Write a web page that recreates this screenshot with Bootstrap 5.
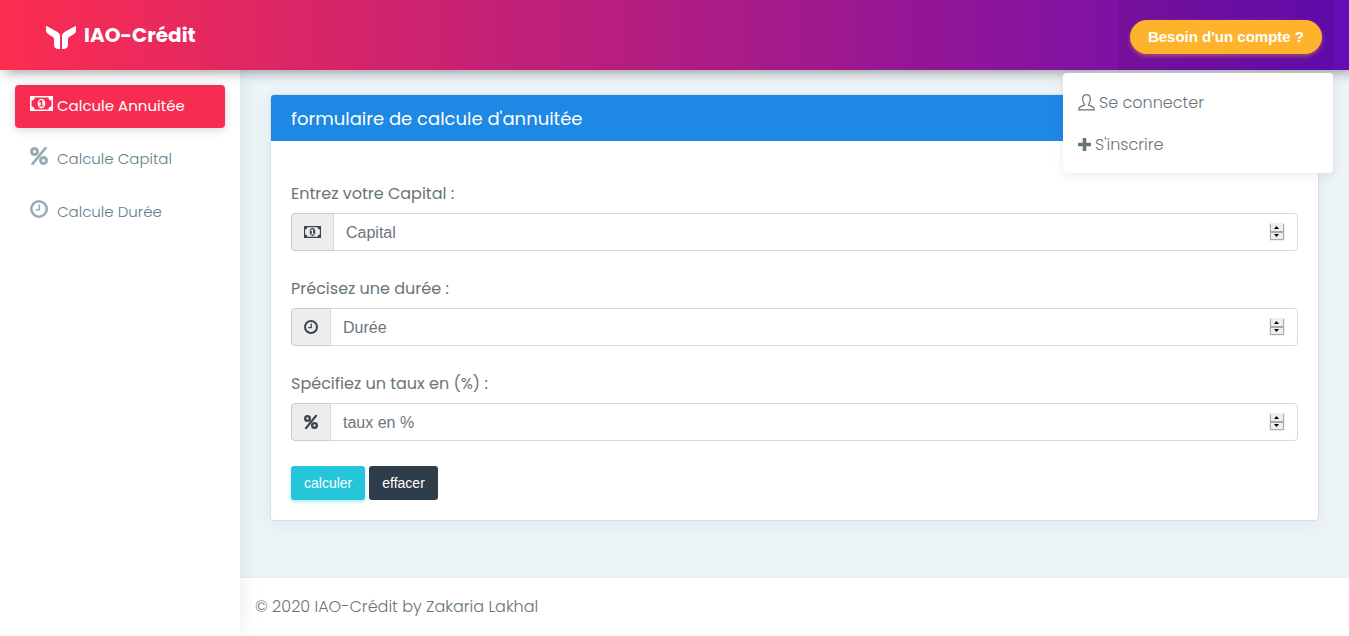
<!DOCTYPE html>
<html lang="fr">
<head>
<meta charset="utf-8">
<meta name="viewport" content="width=device-width, initial-scale=1">
<title>IAO-Crédit</title>
<link href="https://cdn.jsdelivr.net/npm/bootstrap@5.3.0/dist/css/bootstrap.min.css" rel="stylesheet">
<style>
  body { font-family: Poppins, Inter, sans-serif; font-weight: 300; font-size: 16px; line-height: 24px; color: #67757c; background: #edf4f8; }
  .form-control, .btn { font-family: "Liberation Sans", Arial, sans-serif; }
  svg { display: block; flex: none; }
  .topbar { height: 70px; padding: 0 15px 0 46px; background: linear-gradient(to right, #fc2d50, #640cb6); box-shadow: 5px 2px 12px rgba(0,0,0,.4); z-index: 30; }
  .brand { font-size: 20px; font-weight: 700; color: #fff; text-decoration: none; gap: 8px; }
  .brand svg { margin-top: 5px; }
  .account { background: rgba(0,0,0,.06); padding: 4px 12px 0; height: 70px; }
  .btn-account { background: #ffb22b; color: #fff; border: 0; border-radius: 60px; font-size: 15px; font-weight: 700; line-height: 20px; padding: 7px 18px; box-shadow: 0 2px 4px rgba(255,178,43,.4); }
  .btn-account:hover { background: #ffb22b; color: #fff; }
  .account-menu { top: 73px; right: 16px; width: 270px; padding: 9px 0 7px; background: #fff; border-radius: 4px; box-shadow: 0 3px 12px rgba(0,0,0,.08); z-index: 40; }
  .account-menu a { color: #67757c; padding: 9px 15px; gap: 4px; text-decoration: none; }
  .account-menu svg { margin-bottom: 2px; }
  .sidebar { width: 240px; padding: 15px; background: #fff; box-shadow: 1px 0 20px rgba(0,0,0,.08); z-index: 20; }
  .side-link { height: 43px; padding: 0 15px 2px; border-radius: 4px; font-size: 15px; color: #607d8b; text-decoration: none; margin-bottom: 10px; }
  .side-link .ico { width: 27px; color: #99abb4; padding-bottom: 5px; }
  .side-link.active { background: #f62d51; color: #fff; font-weight: 400; box-shadow: 0 2px 10px rgba(0,0,0,.16); }
  .side-link.active .ico { color: #fff; }
  .content { padding: 24px 30px; }
  .calc-card { border: 1px solid #d8e0e3; border-radius: 4px; box-shadow: 0 5px 20px rgba(0,0,0,.05); }
  .calc-card .card-header { background: #1e88e5; color: #fff; padding: 12px 20px 10px; border: 0; border-radius: 3px 3px 0 0; }
  .calc-card h1 { font-size: 18px; line-height: 24px; font-weight: 400; margin: 0; }
  .calc-card .card-body { padding: 40px 20px 20px; }
  .field { margin-bottom: 25px; }
  .form-label { font-weight: 400; line-height: 26px; margin-bottom: 6px; display: block; color: #67757c; }
  .input-group-text { background: #ebedef; border-color: #c9cccf; color: #414548; border-radius: 4px; }
  .form-control { height: 38px; padding: 7px 12px 5px; border-color: #d9d9d9; border-radius: 4px; }
  .form-control::placeholder { color: #6c757d; opacity: 1; }
  .form-control::-webkit-inner-spin-button { -webkit-appearance: none; opacity: 1; width: 16px; height: 18px; margin-bottom: 2px; background: url("data:image/svg+xml,%3Csvg xmlns='http://www.w3.org/2000/svg' viewBox='0 0 16 18'%3E%3Cpath fill='%23efefef' d='M0 0h16v18H0z'/%3E%3Cpath fill='none' stroke='%23aaa' d='M1.5 1v15.500h13V1M1 8.500h14M1 9.500h14'/%3E%3Cpath d='M5 6h5L7.500 3zM5 11h5l-2.500 3z'/%3E%3C/svg%3E") center/16px 18px no-repeat; }
  .btn-form { border: 0; border-radius: 3px; color: #fff; font-size: 14px; line-height: 20px; padding: 7px 13px; }
  .btn-calc { background: #26c6da; box-shadow: 0 2px 3px rgba(38,198,218,.35); }
  .btn-clear { background: #2f3d4a; }
  .page-footer { background: #fff; border-top: 1px solid #e9edef; padding: 17px 15px; }
</style>
</head>
<body>
<svg width="0" height="0" class="position-absolute" aria-hidden="true">
  <symbol id="money" viewBox="0 0 1920 1280" preserveAspectRatio="none"><path fill="currentColor" fill-rule="evenodd" d="M0 0H1920V1280H0ZM128 384V896A256 256 0 0 1 384 1152H1536A256 256 0 0 1 1792 896V384A256 256 0 0 1 1536 128H384A256 256 0 0 1 128 384Z"/><path fill="currentColor" fill-rule="evenodd" d="M960 224c-200 0-320 190-320 416s120 416 320 416 320-190 320-416-120-416-320-416ZM768 896V800H896V512q-50 40-90 50l-70-80 180-146H1024V800H1152V896Z"/></symbol>
  <symbol id="percent" viewBox="0 0 18 18"><g fill="none" stroke="currentColor"><circle cx="4.500" cy="4.500" r="3" stroke-width="3"/><circle cx="13.500" cy="13.500" r="3" stroke-width="3"/><path d="M15.500 1L2.500 17" stroke-width="2.700" stroke-linecap="round"/></g></symbol>
  <symbol id="clock" viewBox="0 0 18 18"><circle cx="9" cy="9" r="7.700" fill="none" stroke="currentColor" stroke-width="2.600"/><path d="M9.300 4.500V9.800H5.500" fill="none" stroke="currentColor" stroke-width="1.600"/></symbol>
</svg>
<div class="d-flex flex-column min-vh-100 position-relative">
  <header class="topbar d-flex align-items-center justify-content-between position-relative">
    <a href="#" class="brand d-flex align-items-center">
      <svg width="30" height="23" viewBox="0 0 30 23" fill="#fff" aria-hidden="true"><path d="M0 1Q0-.3 1 .2L11.500 6Q14 7.500 14 10V23H13Q8 23 8 18.500V13Q8 11.500 6.500 10.700L2 8Q0 6.700 0 4.500Z"/><path d="M30 1Q30-.3 29 .2L18.500 6Q16 7.500 16 10V23H17Q22 23 22 18.500V13Q22 11.500 23.500 10.700L28 8Q30 6.700 30 4.500Z"/></svg>
      <span>IAO-Crédit</span>
    </a>
    <div class="account d-flex align-items-center">
      <button type="button" class="btn btn-account" aria-expanded="true">Besoin d'un compte ?</button>
    </div>
  </header>
  <nav class="account-menu position-absolute" aria-label="Compte">
    <a href="#" class="d-flex align-items-center">
      <svg width="17" height="17" viewBox="0 0 17 17" fill="none" stroke="currentColor" stroke-width="1.200" aria-hidden="true"><path d="M6.500 10.300C5.300 9 4.700 7 4.700 5C4.700 2 6 .7 8.500 .7S12.300 2 12.300 5C12.300 7 11.700 9 10.500 10.300V11L14.500 12.600Q16.300 13.500 16.400 15.900H.6Q.7 13.500 2.500 12.600L6.500 11Z"/></svg>Se connecter</a>
    <a href="#" class="d-flex align-items-center">
      <svg width="13" height="13" viewBox="0 0 13 13" aria-hidden="true"><path d="M6.500 1.500V11.500M1.500 6.500H11.500" stroke="currentColor" stroke-width="3.600" stroke-linecap="square"/></svg>S'inscrire</a>
  </nav>
  <div class="d-flex flex-grow-1">
    <nav class="sidebar flex-shrink-0 position-relative" aria-label="Calculs">
      <a href="#" class="side-link active d-flex align-items-center"><span class="ico"><svg width="23" height="15"><use href="#money"/></svg></span>Calcule Annuitée</a>
      <a href="#" class="side-link d-flex align-items-center"><span class="ico"><svg width="18" height="18"><use href="#percent"/></svg></span>Calcule Capital</a>
      <a href="#" class="side-link d-flex align-items-center"><span class="ico"><svg width="18" height="18"><use href="#clock"/></svg></span>Calcule Durée</a>
    </nav>
    <div class="d-flex flex-column flex-grow-1">
      <main class="content flex-grow-1">
        <div class="card calc-card">
          <div class="card-header"><h1>formulaire de calcule d'annuitée</h1></div>
          <form class="card-body">
            <div class="field">
              <label class="form-label" for="capital">Entrez votre Capital :</label>
              <div class="input-group"><span class="input-group-text"><svg width="17" height="12"><use href="#money"/></svg></span><input type="number" class="form-control" id="capital" placeholder="Capital"></div>
            </div>
            <div class="field">
              <label class="form-label" for="duree">Précisez une durée :</label>
              <div class="input-group"><span class="input-group-text"><svg width="14" height="14"><use href="#clock"/></svg></span><input type="number" class="form-control" id="duree" placeholder="Durée"></div>
            </div>
            <div class="field">
              <label class="form-label" for="taux">Spécifiez un taux en (%) :</label>
              <div class="input-group"><span class="input-group-text"><svg width="14" height="14"><use href="#percent"/></svg></span><input type="number" class="form-control" id="taux" placeholder="taux en %"></div>
            </div>
            <div class="d-flex gap-1">
              <button type="submit" class="btn btn-form btn-calc">calculer</button>
              <button type="reset" class="btn btn-form btn-clear">effacer</button>
            </div>
          </form>
        </div>
      </main>
      <footer class="page-footer">© 2020 IAO-Crédit by Zakaria Lakhal</footer>
    </div>
  </div>
</div>
<script src="https://cdn.jsdelivr.net/npm/bootstrap@5.3.0/dist/js/bootstrap.bundle.min.js"></script>
</body>
</html>
